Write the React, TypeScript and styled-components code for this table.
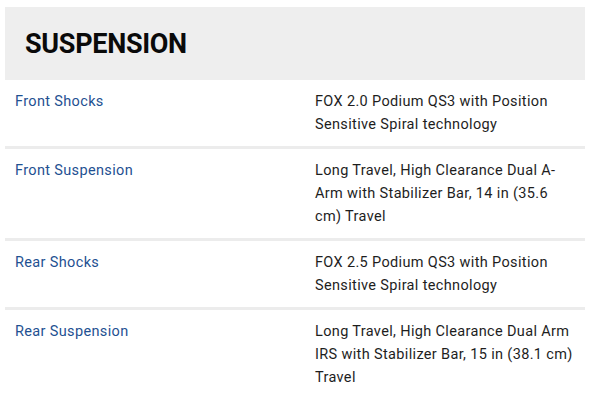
import React from "react";
import styled, { createGlobalStyle } from "styled-components";

const Global = createGlobalStyle`
  html, body { margin: 0; padding: 0; background: #fff; }
  body { font-family: Roboto, "Liberation Sans", Arial, sans-serif; }
`;

const Page = styled.div`
  padding: 7px 19px 0 5px;
`;

const Table = styled.section`
  width: 580px;
`;

const Header = styled.header`
  height: 73px;
  background: #eeeeee;
  display: flex;
  align-items: center;
  padding: 0 20px;
  box-sizing: border-box;
`;

const Title = styled.h2`
  margin: 0;
  font-size: 27px;
  font-weight: 700;
  color: #0a0a0a;
  letter-spacing: -0.3px;
`;

const Row = styled.div<{ $last?: boolean }>`
  display: grid;
  grid-template-columns: 300px 1fr;
  padding: 10px 10px 10px 10px;
  border-bottom: ${(p) => (p.$last ? "none" : "3px solid #ececec")};
  font-size: 14.5px;
  line-height: 23px;
  letter-spacing: 0.35px;
`;

const Label = styled.div`
  color: #1f5192;
`;

const Value = styled.div`
  color: #1e1e1e;
`;

const rows = [
  {
    label: "Front Shocks",
    value: "FOX 2.0 Podium QS3 with Position Sensitive Spiral technology",
  },
  {
    label: "Front Suspension",
    value:
      "Long Travel, High Clearance Dual A-Arm with Stabilizer Bar, 14 in (35.6 cm) Travel",
  },
  {
    label: "Rear Shocks",
    value: "FOX 2.5 Podium QS3 with Position Sensitive Spiral technology",
  },
  {
    label: "Rear Suspension",
    value:
      "Long Travel, High Clearance Dual Arm IRS with Stabilizer Bar, 15 in (38.1 cm) Travel",
  },
];

export default function App() {
  return (
    <>
      <Global />
      <Page>
        <Table>
          <Header>
            <Title>SUSPENSION</Title>
          </Header>
          {rows.map((r, i) => (
            <Row key={r.label} $last={i === rows.length - 1}>
              <Label>{r.label}</Label>
              <Value>{r.value}</Value>
            </Row>
          ))}
        </Table>
      </Page>
    </>
  );
}
